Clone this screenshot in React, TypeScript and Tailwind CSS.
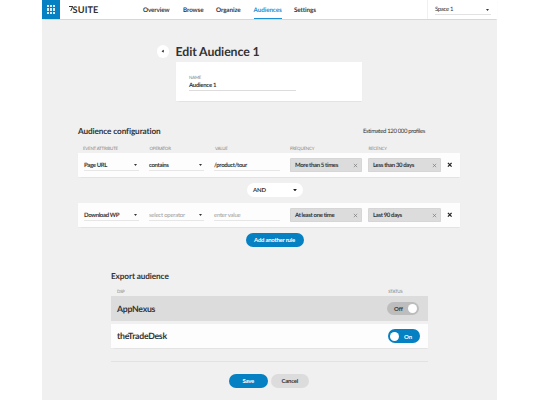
import React, { useState } from 'react';

const NAV = [
  { label: 'Overview', width: 'w-[40px]' },
  { label: 'Browse', width: 'w-[33px]' },
  { label: 'Organize', width: 'w-[37.5px]' },
  { label: 'Audiences', width: 'w-[40.5px]', active: true },
  { label: 'Settings', width: 'w-[24px]' },
];

const RULES = [
  { attribute: 'Page URL', operator: 'contains', value: '/product/tour', frequency: 'More than 5 times', recency: 'Less than 30 days' },
  { attribute: 'Download WP', operator: '', value: '', frequency: 'At least one time', recency: 'Last 90 days' },
];

const Caret = ({ className = '' }: { className?: string }) => (
  <svg viewBox="0 0 6 4" className={`shrink-0 ${className}`} fill="currentColor">
    <path d="M0 0h6L3 4z" />
  </svg>
);

const Cross = ({ className = '', stroke = 1 }: { className?: string; stroke?: number }) => (
  <svg viewBox="0 0 6 6" className={`shrink-0 ${className}`} fill="none" stroke="currentColor" strokeWidth={stroke}>
    <path d="M1 1l4 4M5 1L1 5" />
  </svg>
);

const Label = ({ children, className = '' }: { children: React.ReactNode; className?: string }) => (
  <span className={`block text-[4.4px] leading-[5px] tracking-[-0.2px] text-[#858585] ${className}`}>{children}</span>
);

// Underlined field used inside the rule rows
const Field = ({ text, placeholder, select, className }: { text: string; placeholder: string; select?: boolean; className: string }) => (
  <div className={`flex items-center justify-between h-[11px] mt-[7px] border-b border-[#e6e6e6] pr-[2px] ${className}`}>
    <span className={text ? 'font-bold' : 'text-[#a0a0a0] tracking-[-0.25px]'}>{text || placeholder}</span>
    {select && <Caret className="w-[3px] h-[2px]" />}
  </div>
);

const Tag = ({ text, className }: { text: string; className: string }) => (
  <div className={`flex items-center justify-between h-[14px] mt-[5px] pl-[5px] pr-[4px] bg-[#dcdcdc] shadow-[inset_0_0_0_0.5px_#d0d0d0] rounded-[1.5px] ${className}`}>
    <span className="font-bold">{text}</span>
    <Cross className="w-[5px] h-[5px] text-[#777]" stroke={0.8} />
  </div>
);

const RuleRow = ({ rule }: { rule: (typeof RULES)[number] }) => (
  <div className="flex w-[382px] h-[24px] ml-[36px] pl-[6px] bg-[#fdfdfd] shadow-[0_0.5px_1px_rgba(0,0,0,0.05)]">
    <Field className="w-[55px]" text={rule.attribute} placeholder="select attribute" select />
    <Field className="w-[55px] ml-[10px]" text={rule.operator} placeholder="select operator" select />
    <Field className="w-[66px] ml-[10px]" text={rule.value} placeholder="enter value" />
    <Tag className="w-[72px] ml-[10px]" text={rule.frequency} />
    <Tag className="w-[73px] ml-[6px]" text={rule.recency} />
    <button className="ml-[6px]">
      <Cross className="w-[5.5px] h-[5.5px] text-[#222]" stroke={1.4} />
    </button>
  </div>
);

const Toggle = ({ on, onClick }: { on: boolean; onClick: () => void }) => (
  <button
    onClick={onClick}
    className={`flex items-center justify-between w-[32px] h-[13.5px] rounded-full font-bold tracking-[-0.1px] ${
      on ? 'flex-row-reverse bg-[#0580c2] text-white pl-[2.5px] pr-[7.5px]' : 'bg-[#bdbdbd] pl-[7px] pr-[2.5px]'
    }`}
  >
    <span>{on ? 'On' : 'Off'}</span>
    <span className="size-[9px] rounded-full bg-white" />
  </button>
);

export default function App() {
  const [appNexus, setAppNexus] = useState(false);
  const [tradeDesk, setTradeDesk] = useState(true);

  return (
    <div className="w-[538px] h-[400px] overflow-hidden bg-white font-['Lato',sans-serif] text-[6px] leading-[7px] tracking-[-0.35px] text-[#333] whitespace-nowrap [text-rendering:geometricPrecision]">
      <div className="w-[455px] h-[400px] ml-[42px] bg-[#f0f0f0]">
        {/* Top bar */}
        <header className="flex h-[19px] bg-white shadow-[0_0.5px_1px_rgba(0,0,0,0.1)]">
          <div className="flex items-center justify-center w-[18px] bg-[#0580c2]">
            <div className="grid grid-cols-3 gap-[1px]">
              {Array.from({ length: 9 }, (_, i) => (
                <span key={i} className="size-[2.3px] bg-[#d5ecf8]" />
              ))}
            </div>
          </div>
          <div className="flex items-center w-[83px] pl-[8.5px]">
            <svg viewBox="0 0 5 6" className="w-[4.6px] h-[5.6px] mb-[2px]" fill="none" stroke="currentColor" strokeWidth="1.1">
              <path d="M0 0.6h4L1.8 5.5" />
            </svg>
            <span className="text-[9.2px] leading-[10px] pt-[1px] -ml-[0.5px] font-bold tracking-[0.1px]">SUITE</span>
          </div>
          <nav className="flex tracking-[-0.1px]">
            {NAV.map((item) => (
              <div key={item.label} className={item.width}>
                <a
                  className={`inline-flex items-center h-[19px] pt-[2px] text-[6.3px] font-bold border-b ${
                    item.active ? 'border-[#1b90d2] text-[#1b90d2]' : 'border-transparent'
                  }`}
                >
                  {item.label}
                </a>
              </div>
            ))}
          </nav>
          <div className="ml-auto w-[70px] pl-[7px] border-l border-[#f0f0f0]">
            <div className="flex items-center justify-between w-[56px] h-[10px] mt-[5px] pr-[2px] border-b border-[#e2e2e2]">
              <span>Space 1</span>
              <Caret className="w-[3px] h-[2px]" />
            </div>
          </div>
        </header>

        {/* Title and name */}
        <div className="flex items-center h-[13px] mt-[26px] ml-[114.5px]">
          <button className="flex items-center justify-center size-[12.5px] rounded-full bg-white">
            <Caret className="w-[3.4px] h-[2.6px] rotate-90" />
          </button>
          <h1 className="ml-[6.5px] text-[12.3px] leading-[13px] font-bold tracking-[-0.1px]">Edit Audience 1</h1>
        </div>
        <section className="w-[186px] h-[39px] mt-[4px] ml-[134px] pl-[13px] pt-[13px] bg-white shadow-[0_0.5px_1px_rgba(0,0,0,0.05)]">
          <Label>NAME</Label>
          <div className="w-[107px] h-[11px] pt-[1.5px] border-b border-[#dcdcdc] font-bold tracking-[-0.28px]">Audience 1</div>
        </section>

        {/* Rules */}
        <div className="flex items-center justify-between h-[10px] mt-[25px] ml-[36px] w-[347px]">
          <h2 className="text-[8.2px] font-bold tracking-[-0.1px]">Audience configuration</h2>
          <span className="pt-[1px]">Estimated 120 000 profiles</span>
        </div>
        <div className="flex h-[5px] mt-[10px] mb-[2px] pl-[41px]">
          <Label className="w-[66.5px]">EVENT ATTRIBUTE</Label>
          <Label className="w-[65.5px]">OPERATOR</Label>
          <Label className="w-[75px]">VALUE</Label>
          <Label className="w-[78.5px]">FREQUENCY</Label>
          <Label>RECENCY</Label>
        </div>
        <RuleRow rule={RULES[0]} />
        <button className="flex items-center justify-between w-[55.5px] h-[13.5px] mt-[6px] ml-[205px] pl-[6px] pr-[6px] rounded-full bg-white">
          <span className="font-bold tracking-[-0.15px]">AND</span>
          <Caret className="w-[4px] h-[2.5px] text-[#222]" />
        </button>
        <div className="h-[6.5px]" />
        <RuleRow rule={RULES[1]} />
        <button className="flex items-center justify-center w-[58px] h-[13.5px] mt-[6px] ml-[203.5px] rounded-full bg-[#0580c2] text-white font-bold tracking-[-0.25px]">
          Add another rule
        </button>

        {/* Export */}
        <section className="w-[316.5px] mt-[24px] ml-[69px]">
          <h2 className="text-[8.2px] leading-[10px] font-bold tracking-[-0.1px]">Export audience</h2>
          <div className="flex justify-between h-[5px] mt-[8px] pl-[6px] pr-[25px]">
            <Label>DSP</Label>
            <Label>STATUS</Label>
          </div>
          <div className="flex items-center justify-between h-[24.5px] mt-[2.5px] pl-[6px] pr-[8.5px] bg-[#dcdcdc]">
            <span className="text-[8.7px] font-bold tracking-[-0.25px]">AppNexus</span>
            <Toggle on={appNexus} onClick={() => setAppNexus(!appNexus)} />
          </div>
          <div className="flex items-center justify-between h-[24px] mt-[3.5px] pl-[6px] pr-[8px] bg-[#fdfdfd] shadow-[0_0.5px_1px_rgba(0,0,0,0.05)]">
            <span className="pb-[1px] text-[8.7px] font-bold tracking-[-0.25px]">theTradeDesk</span>
            <Toggle on={tradeDesk} onClick={() => setTradeDesk(!tradeDesk)} />
          </div>
          <div className="h-px mt-[12.5px] bg-[#e2e2e2]" />
        </section>
        <div className="flex gap-[3px] mt-[12.5px] ml-[187px] font-bold tracking-[-0.2px]">
          <button className="w-[38.5px] h-[13.5px] rounded-full bg-[#0580c2] text-white">Save</button>
          <button className="w-[38.5px] h-[13.5px] rounded-full bg-[#dcdcdc]">Cancel</button>
        </div>
      </div>
    </div>
  );
}
